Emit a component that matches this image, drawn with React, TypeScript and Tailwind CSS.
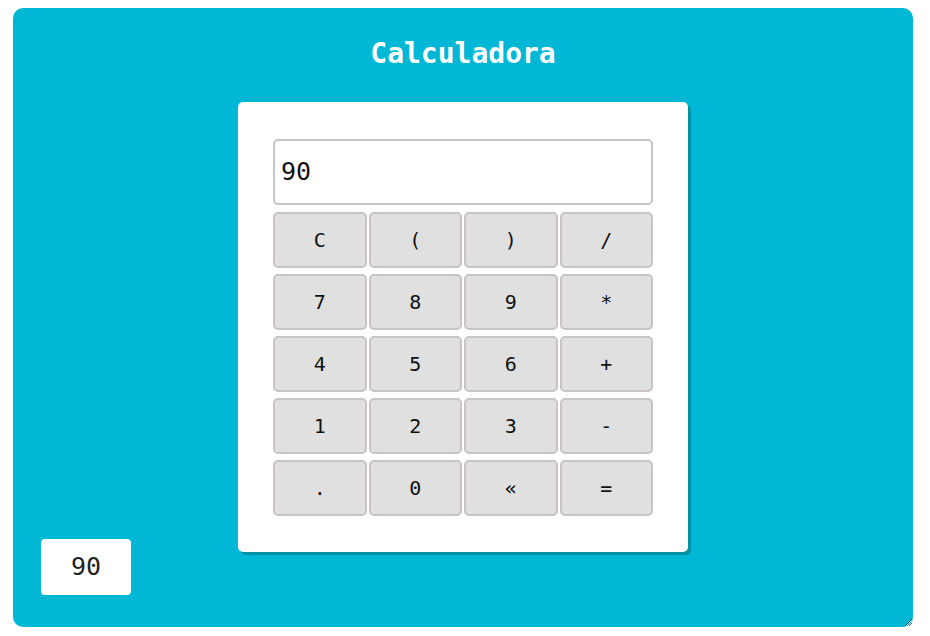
const KEYS: string[][] = [
  ["C", "(", ")", "/"],
  ["7", "8", "9", "*"],
  ["4", "5", "6", "+"],
  ["1", "2", "3", "-"],
  [".", "0", "«", "="],
];

const mono = "font-['DejaVu_Sans_Mono',monospace]";

export default function App() {
  return (
    <div className={`bg-white px-[13px] pt-[8px] pb-[9px] ${mono}`}>
      <div className="relative h-[619px] w-[900px] resize overflow-auto rounded-[10px] bg-[#00b8d6]">
        <h1 className="pt-[28px] text-center text-[28px] leading-[36px] font-bold text-white">Calculadora</h1>
        <div className="mx-auto mt-[30px] w-[450px] rounded-[5px] bg-white px-[35px] pt-[37px] pb-[36px] shadow-[3px_3px_0_#0590a6]">
          <div className="flex h-[66px] items-center rounded-[5px] border-2 border-[#c9c3c3] px-[6px] text-[25px] text-[#111]">
            90
          </div>
          <div className="mt-[7px] flex flex-col gap-[6px]">
            {KEYS.map((row, i) => (
              <div key={i} className="grid grid-cols-4 gap-[2px]">
                {row.map((k) => (
                  <button
                    key={k}
                    className="flex h-[56px] items-center justify-center rounded-[5px] border-2 border-[#c9c3c3] bg-[#e0e0e0] text-[20px] text-[#111]"
                  >
                    {k}
                  </button>
                ))}
              </div>
            ))}
          </div>
        </div>
        <div className="absolute bottom-[32px] left-[28px] flex h-[56px] w-[90px] items-center justify-center rounded-[4px] bg-white text-[25px] text-[#222]">
          90
        </div>
      </div>
    </div>
  );
}
